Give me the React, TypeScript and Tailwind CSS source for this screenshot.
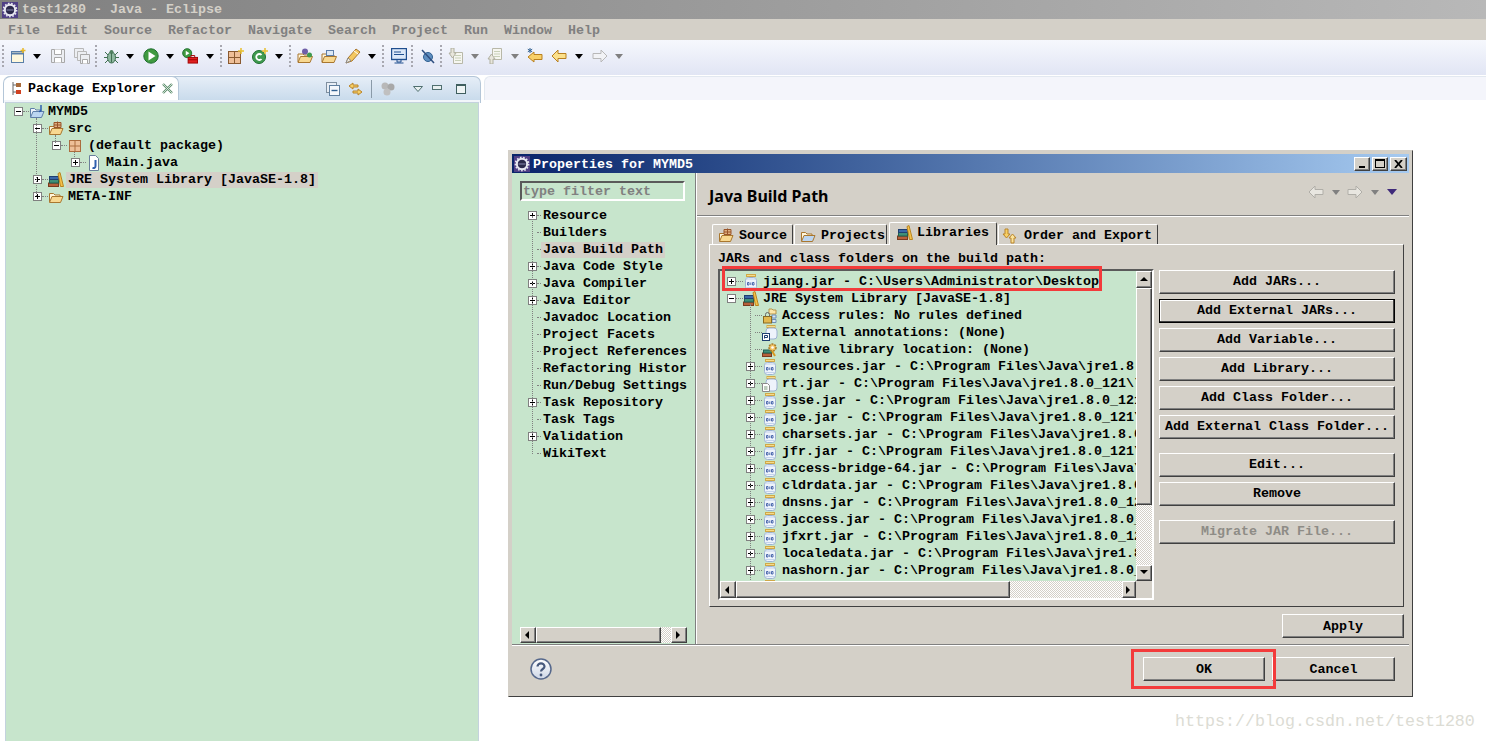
import type { ReactNode } from 'react'

const FACE = 'bg-[#d4d0c8]'
const RAISED =
  'border border-t-white border-l-white border-r-[#404040] border-b-[#404040] shadow-[inset_-1px_-1px_0_#808080]'
const HATCH = 'bg-[repeating-conic-gradient(#d4d0c8_0%_25%,#ffffff_0%_50%)] bg-[length:2px_2px]'

/* ---------- small drawings ---------- */

function Gear({ className }: { className: string }) {
  return (
    <svg viewBox="0 0 16 16" className={className}>
      <rect width="16" height="16" fill="#4f3f86" />
      <circle cx="8" cy="8" r="5.2" fill="none" stroke="#e8e8f0" strokeWidth="2" />
      <circle cx="8" cy="8" r="6.6" fill="none" stroke="#e8e8f0" strokeWidth="1.6" strokeDasharray="1.6 1.6" />
      <circle cx="8" cy="8" r="4" fill="#2b2a4a" />
      <path d="M4.5 8h7" stroke="#8a88b0" />
    </svg>
  )
}

function Jar() {
  return (
    <svg viewBox="0 0 16 16" className="w-4 h-4 shrink-0">
      <rect x="3.500" y="0.500" width="9" height="2" fill="#f6dc8a" stroke="#d0a848" />
      <rect x="2.500" y="3.500" width="11" height="12" rx="3" fill="#eef3fb" stroke="#9db2d2" />
      <path d="M3 5h10" stroke="#c4d4ec" />
      <path d="M4.500 8.500v2.500h1.500V8.500zM7.800 8.500v2.500M9.500 8.500v2.500h1.500V8.500z" fill="none" stroke="#3d5ea6" strokeWidth="0.900" />
      <path d="M3.500 13.500h9" stroke="#c4d4ec" />
    </svg>
  )
}

function OpenFolder({ tint = '#f8d890' }: { tint?: string }) {
  return (
    <svg viewBox="0 0 16 16" className="w-4 h-4 shrink-0">
      <path d="M1.500 13V4.500h4l1.500 1.500h5v2" fill="#fff6dc" stroke="#a9772f" />
      <path d="M1.500 13.500l2.500-6h11l-2.500 6z" fill={tint} stroke="#a9772f" />
    </svg>
  )
}

function ProjectFolder() {
  return (
    <svg viewBox="0 0 16 16" className="w-4 h-4 shrink-0">
      <path d="M1.500 13V4.500h4l1.500 1.500h5v2" fill="#eef4fc" stroke="#5f7fa8" />
      <path d="M1.500 13.500l2.500-6h11l-2.500 6z" fill="#bcd6f2" stroke="#5f7fa8" />
      <path d="M12 1v5q0 1.500-2 1.500" fill="none" stroke="#2f5fae" strokeWidth="1.500" />
    </svg>
  )
}

function SrcFolder() {
  return (
    <svg viewBox="0 0 16 16" className="w-4 h-4 shrink-0">
      <path d="M1.500 13V5.500h10v2" fill="#fff6dc" stroke="#a9772f" />
      <path d="M1.500 13.500l2.500-6h11l-2.500 6z" fill="#f8d890" stroke="#a9772f" />
      <path d="M6 4h7M6 1.500h7v5H6zM9.500 0.500v6" fill="#e0b080" stroke="#99552a" />
    </svg>
  )
}

function Pkg() {
  return (
    <svg viewBox="0 0 16 16" className="w-4 h-4 shrink-0">
      <rect x="2.500" y="2.500" width="11" height="11" fill="#eebf98" stroke="#ab6c3e" />
      <path d="M8 2.500v11M2.500 8h11" stroke="#ab6c3e" />
    </svg>
  )
}

function JavaFile() {
  return (
    <svg viewBox="0 0 16 16" className="w-4 h-4 shrink-0">
      <path d="M3.500 0.500h6l3 3v12h-9z" fill="#fff" stroke="#6a7f9c" />
      <path d="M9.500 5v6q0 2.500-3 2" fill="none" stroke="#2f5fae" strokeWidth="2" />
    </svg>
  )
}

function Library() {
  return (
    <svg viewBox="0 0 16 16" className="w-4 h-4 shrink-0">
      <rect x="0.500" y="11" width="10" height="3.500" fill="#b8603a" stroke="#7a3a1e" />
      <rect x="1.500" y="7.500" width="9" height="3.500" fill="#3f8f78" stroke="#1f5f50" />
      <rect x="1.500" y="4.500" width="9" height="3" fill="#3a68a8" stroke="#1f3f70" />
      <path d="M10 1.500l2-1 3.500 14h-3z" fill="#f4c14a" stroke="#b98420" />
    </svg>
  )
}

function AccessIcon() {
  return (
    <svg viewBox="0 0 16 16" className="w-4 h-4 shrink-0">
      <path d="M7 1h3l1 1h3v4H7z" fill="#fbe6a8" stroke="#b9954a" />
      <path d="M10 7h4v3h-4zM10 11.500h4v3h-4z" fill="#d9e6f5" stroke="#6f8fb5" />
      <rect x="1.500" y="8.500" width="8" height="6.500" fill="#e2b850" stroke="#8a6a20" />
      <path d="M3.500 8.500v-2a2 2 0 014 0v2" fill="none" stroke="#6a6a6a" />
    </svg>
  )
}

function AnnotIcon() {
  return (
    <svg viewBox="0 0 16 16" className="w-4 h-4 shrink-0">
      <rect x="5" y="0.500" width="8" height="2" fill="#f6dc8a" stroke="#d0a848" />
      <rect x="4" y="3" width="11" height="11" rx="3" fill="#eef3fb" stroke="#9db2d2" />
      <rect x="0.500" y="8.500" width="7" height="7" fill="#fff" stroke="#1f3f70" />
      <path d="M2.500 13.500v-3h3v2h-3" fill="none" stroke="#1f3f70" />
    </svg>
  )
}

function NativeIcon() {
  return (
    <svg viewBox="0 0 16 16" className="w-4 h-4 shrink-0">
      <rect x="0.500" y="11" width="9" height="3.500" fill="#b8603a" stroke="#7a3a1e" />
      <rect x="1.500" y="8" width="8" height="3" fill="#3f8f78" stroke="#1f5f50" />
      <circle cx="10.500" cy="5.500" r="3.500" fill="#f0c060" stroke="#a57a2a" strokeWidth="1.500" strokeDasharray="2 1" />
      <circle cx="10.500" cy="5.500" r="1.300" fill="#fff" />
      <path d="M10 9l3 5" stroke="#d89a20" strokeWidth="2" />
    </svg>
  )
}

function RtJar() {
  return (
    <svg viewBox="0 0 16 16" className="w-4 h-4 shrink-0">
      <rect x="5" y="0.500" width="8" height="2" fill="#f6dc8a" stroke="#d0a848" />
      <rect x="4" y="3" width="11" height="12" rx="3" fill="#eef3fb" stroke="#9db2d2" />
      <path d="M0.500 7.500h5l2 2v6h-7z" fill="#fff" stroke="#8a8a8a" />
      <path d="M2 11h3.500M2 13h3.500" stroke="#7a9a7a" />
    </svg>
  )
}

function OrderIcon() {
  return (
    <svg viewBox="0 0 16 16" className="w-4 h-4 shrink-0">
      <path d="M3 1h3v5h2L4.500 10 1 6h2z" fill="#f7d066" stroke="#b9842a" />
      <path d="M9 15h3v-5h2l-3.500-4L7 10h2z" fill="#fbe39a" stroke="#b9842a" />
    </svg>
  )
}

function DropArrow({ className = 'fill-black' }: { className?: string }) {
  return (
    <svg viewBox="0 0 8 5" className={`w-[8px] h-[5px] shrink-0 ${className}`}>
      <path d="M0 0h8L4 5z" />
    </svg>
  )
}

function Arrow({ dir, className, stroke, fill }: { dir: 'left' | 'right'; className?: string; stroke: string; fill: string }) {
  return (
    <svg viewBox="0 0 16 14" className={`w-4 h-[14px] shrink-0 ${className ?? ''}`}>
      <path
        d={dir === 'left' ? 'M1 7l6-6v3.500h8v5H7V13z' : 'M15 7L9 1v3.500H1v5h8V13z'}
        fill={fill}
        stroke={stroke}
      />
    </svg>
  )
}

function Expander({ open }: { open?: boolean }) {
  return (
    <svg viewBox="0 0 9 9" className="w-[9px] h-[9px] shrink-0">
      <rect x="0.500" y="0.500" width="8" height="8" fill="#fff" stroke="#808080" />
      <path d={open ? 'M2 4.500h5' : 'M2 4.500h5M4.500 2v5'} stroke="#000" />
    </svg>
  )
}

function Grip({ className }: { className: string }) {
  return <span className={`w-[2px] h-[22px] shrink-0 border-l-2 border-dotted border-[#a8a8b0] ${className}`} />
}

function ScrollBtn({ dir, className = '' }: { dir: 'up' | 'down' | 'left' | 'right'; className?: string }) {
  const d = { up: 'M4 1l4 4H0z', down: 'M4 5L0 1h8z', left: 'M1 4l4-4v8z', right: 'M5 4L1 0v8z' }[dir]
  return (
    <div className={`${FACE} ${RAISED} shrink-0 flex items-center justify-center ${className}`}>
      <svg viewBox="0 0 8 8" className="w-2 h-2 fill-black">
        <path d={d} />
      </svg>
    </div>
  )
}

/* ---------- tree ---------- */

function TreeRow({
  indent,
  open,
  leaf,
  icon,
  textClass = '',
  dots = 'w-[6px]',
  children,
}: {
  indent: string
  open?: boolean
  leaf?: boolean
  icon?: ReactNode
  textClass?: string
  dots?: string
  children: ReactNode
}) {
  return (
    <div className={`flex h-[17px] items-center whitespace-nowrap ${indent}`}>
      {leaf ? <span className="w-[9px] h-px shrink-0" /> : <Expander open={open} />}
      <span className={`border-t border-dotted border-[#808080] shrink-0 ${dots}`} />
      {icon}
      <span className={`h-[16px] leading-[16px] px-[2px] shrink-0 ${textClass}`}>{children}</span>
    </div>
  )
}

const JRE_JARS = [
  ['resources.jar - C:\\Program Files\\Java\\jre1.8.0_121\\lib', 'jar'],
  ['rt.jar - C:\\Program Files\\Java\\jre1.8.0_121\\lib\\rt', 'rt'],
  ['jsse.jar - C:\\Program Files\\Java\\jre1.8.0_121\\lib', 'jar'],
  ['jce.jar - C:\\Program Files\\Java\\jre1.8.0_121\\lib', 'jar'],
  ['charsets.jar - C:\\Program Files\\Java\\jre1.8.0_121\\lib', 'jar'],
  ['jfr.jar - C:\\Program Files\\Java\\jre1.8.0_121\\lib', 'jar'],
  ['access-bridge-64.jar - C:\\Program Files\\Java\\jre1.8.0', 'jar'],
  ['cldrdata.jar - C:\\Program Files\\Java\\jre1.8.0_121\\lib', 'jar'],
  ['dnsns.jar - C:\\Program Files\\Java\\jre1.8.0_121\\lib', 'jar'],
  ['jaccess.jar - C:\\Program Files\\Java\\jre1.8.0_121\\lib', 'jar'],
  ['jfxrt.jar - C:\\Program Files\\Java\\jre1.8.0_121\\lib', 'jar'],
  ['localedata.jar - C:\\Program Files\\Java\\jre1.8.0_121', 'jar'],
  ['nashorn.jar - C:\\Program Files\\Java\\jre1.8.0_121\\lib', 'jar'],
  ['sunec.jar - C:\\Program Files\\Java\\jre1.8.0_121\\lib', 'jar'],
]

const PREF_PAGES: [string, boolean, boolean?][] = [
  ['Resource', true],
  ['Builders', false],
  ['Java Build Path', false, true],
  ['Java Code Style', true],
  ['Java Compiler', true],
  ['Java Editor', true],
  ['Javadoc Location', false],
  ['Project Facets', false],
  ['Project References', false],
  ['Refactoring History', false],
  ['Run/Debug Settings', false],
  ['Task Repository', true],
  ['Task Tags', false],
  ['Validation', true],
  ['WikiText', false],
]

function SideButton({ label, className = '', disabled, main }: { label: string; className?: string; disabled?: boolean; main?: boolean }) {
  return (
    <button
      className={`w-full h-[24px] shrink-0 ${FACE} text-center ${main ? 'border border-black shadow-[inset_-1px_-1px_0_#404040,inset_1px_1px_0_#fff]' : RAISED} ${disabled ? 'text-[#8e8c86]' : ''} ${className}`}
    >
      {label}
    </button>
  )
}

function Toolbar() {
  const drop = 'fill-black'
  const dim = 'fill-[#808080]'
  return (
    <div className="h-[35px] flex items-center pl-[2px] pb-[3px] bg-gradient-to-b from-[#f6f8fd] to-[#e1e5f4]">
      <Grip className="" />
      {/* new */}
      <svg viewBox="0 0 16 16" className="w-4 h-4 ml-[6px]">
        <rect x="1.500" y="3.500" width="12" height="11" fill="#fff8dc" stroke="#5a7fa8" />
        <path d="M1.500 5.500h12" stroke="#5a7fa8" strokeWidth="2" />
        <path d="M13 0v5M10.500 2.500h5" stroke="#e8b828" strokeWidth="1.500" />
      </svg>
      <span className="ml-[7px]"><DropArrow className={drop} /></span>
      {/* save */}
      <svg viewBox="0 0 16 16" className="w-4 h-4 ml-[9px]">
        <path d="M1.500 1.500h13v13h-13z" fill="#eceef2" stroke="#a8a8a8" />
        <path d="M4.500 1.500v5h7v-5M4.500 14.500v-5h7v5" fill="#fff" stroke="#a8a8a8" />
      </svg>
      <svg viewBox="0 0 16 16" className="w-4 h-4 ml-[8px]">
        <path d="M0.500 0.500h9v9h-9z" fill="#eceef2" stroke="#b8b8b8" />
        <path d="M3.500 3.500h9v9h-9z" fill="#eceef2" stroke="#b8b8b8" />
        <path d="M6.500 6.500h9v9h-9z" fill="#eceef2" stroke="#a8a8a8" />
        <path d="M8.500 15.500v-4h5v4" fill="#fff" stroke="#a8a8a8" />
      </svg>
      <Grip className="ml-[5px]" />
      {/* debug */}
      <svg viewBox="0 0 16 16" className="w-4 h-4 ml-[6px]">
        <ellipse cx="8.500" cy="9.500" rx="4" ry="5.500" fill="#8fb8a0" stroke="#3f6f50" />
        <circle cx="8.500" cy="4" r="2" fill="#4f7f5f" />
        <path d="M2 4l3 3M15 4l-3 3M1 9.500h3.500M16 9.500h-3.500M2 15l3-3M15 15l-3-3M8.500 5v9.500" stroke="#3f6f50" fill="none" />
      </svg>
      <span className="ml-[7px]"><DropArrow className={drop} /></span>
      {/* run */}
      <svg viewBox="0 0 16 16" className="w-4 h-4 ml-[9px]">
        <circle cx="8" cy="8" r="7.200" fill="#3f9a3f" stroke="#1f6f2f" />
        <path d="M5.500 3.500l7 4.500-7 4.500z" fill="#fff" />
      </svg>
      <span className="ml-[7px]"><DropArrow className={drop} /></span>
      {/* external tools */}
      <svg viewBox="0 0 17 16" className="w-4 h-4 ml-[8px]">
        <circle cx="5.500" cy="5" r="4.800" fill="#3f9a3f" stroke="#1f6f2f" />
        <path d="M4 2.500l4 2.500-4 2.500z" fill="#fff" />
        <rect x="6.500" y="9.500" width="10" height="6" fill="#e02020" stroke="#a00000" />
        <path d="M9.500 9.500v-2h4v2M6.500 12h10" fill="none" stroke="#a00000" />
      </svg>
      <span className="ml-[8px]"><DropArrow className={drop} /></span>
      <Grip className="ml-[6px]" />
      {/* new package */}
      <svg viewBox="0 0 16 16" className="w-4 h-4 ml-[6px]">
        <rect x="0.500" y="3.500" width="12" height="12" fill="#eebf98" stroke="#8a5a30" />
        <path d="M6.500 3.500v12M0.500 9.500h12" stroke="#8a5a30" />
        <path d="M13 0v6M10 3h6" stroke="#e8c030" strokeWidth="1.500" />
      </svg>
      {/* new class */}
      <svg viewBox="0 0 16 16" className="w-4 h-4 ml-[8px]">
        <circle cx="7" cy="9" r="6.500" fill="#3f9a4f" stroke="#1f6f2f" />
        <path d="M9.500 7a3 3 0 100 4" fill="none" stroke="#fff" strokeWidth="1.800" />
        <path d="M13 0v6M10 3h6" stroke="#e8c030" strokeWidth="1.500" />
      </svg>
      <span className="ml-[7px]"><DropArrow className={drop} /></span>
      <Grip className="ml-[6px]" />
      {/* open type */}
      <svg viewBox="0 0 16 16" className="w-4 h-4 ml-[6px]">
        <path d="M1 14V6h5l1 1h6v2" fill="#fff6dc" stroke="#a9772f" />
        <path d="M1 14.500l2.500-6h12l-2.500 6z" fill="#f8d890" stroke="#a9772f" />
        <circle cx="8" cy="3.500" r="3" fill="#6f5fa8" />
        <circle cx="12.500" cy="7" r="2.500" fill="#3f9a4f" />
      </svg>
      <svg viewBox="0 0 16 16" className="w-4 h-4 ml-[8px]">
        <path d="M1 14V6h4l1 1h7v2" fill="#fff6dc" stroke="#a9772f" />
        <path d="M1 14.500l2.500-6h12l-2.500 6z" fill="#f8d890" stroke="#a9772f" />
        <rect x="5.500" y="2.500" width="7" height="5" fill="#dce8f5" stroke="#5f7fa8" />
      </svg>
      {/* search pencil */}
      <svg viewBox="0 0 16 16" className="w-4 h-4 ml-[8px]">
        <path d="M1 15l2-5 8-9 4 3-8 9z" fill="#f4c860" stroke="#a9772f" />
        <path d="M1 15l2-5 3 2.500z" fill="#f8f0e0" stroke="#8a8a8a" />
        <path d="M9 3l4 3" stroke="#fff" />
      </svg>
      <span className="ml-[7px]"><DropArrow className={drop} /></span>
      <Grip className="ml-[6px]" />
      {/* monitor */}
      <svg viewBox="0 0 16 16" className="w-4 h-4 ml-[7px]">
        <rect x="0.500" y="0.500" width="15" height="11" fill="#dbe8f8" stroke="#1f4f8f" strokeWidth="1.400" />
        <path d="M3 4h7M3 6.500h10" stroke="#1f4f8f" />
        <path d="M6 12v2h4v-2M3.500 15h9" stroke="#1f4f8f" fill="none" />
      </svg>
      <Grip className="ml-[4px]" />
      {/* skip breakpoints */}
      <svg viewBox="0 0 16 16" className="w-4 h-4 ml-[7px]">
        <circle cx="8" cy="9" r="4.500" fill="#5f8fc0" stroke="#2f5f90" />
        <path d="M2 2l12 13" stroke="#2f4f80" strokeWidth="1.500" />
      </svg>
      <Grip className="ml-[4px]" />
      {/* next annotation */}
      <svg viewBox="0 0 16 16" className="w-4 h-4 ml-[6px]">
        <path d="M5.500 4.500h9v11h-9z" fill="#f6f6f0" stroke="#b8b8a8" />
        <path d="M7 7.500h6M7 10h6M7 12.500h6" stroke="#c8d0b8" />
        <path d="M3 0h3v5h2L4.500 10 1 5h2z" fill="#e8e6dc" stroke="#b0b0a0" />
      </svg>
      <span className="ml-[7px]"><DropArrow className={dim} /></span>
      <svg viewBox="0 0 16 16" className="w-4 h-4 ml-[8px]">
        <path d="M5.500 0.500h9v11h-9z" fill="#f6f6f0" stroke="#b8b8a8" />
        <path d="M7 3.500h6M7 6h6M7 8.500h6" stroke="#c8d0b8" />
        <path d="M3 16h3v-5h2L4.500 6 1 11h2z" fill="#e8e6dc" stroke="#b0b0a0" />
      </svg>
      <span className="ml-[8px]"><DropArrow className={dim} /></span>
      {/* last edit */}
      <svg viewBox="0 0 16 16" className="w-4 h-4 ml-[8px]">
        <path d="M1 9l6-5v2.500h8v5H7V14z" fill="#f8d068" stroke="#b9801f" />
        <path d="M3 0v5M0.800 1.200l4.400 2.600M5.200 1.200L0.800 3.800" stroke="#2f5f90" />
      </svg>
      <Arrow dir="left" stroke="#b9801f" fill="#fbe08a" className="ml-[8px]" />
      <span className="ml-[8px]"><DropArrow className={drop} /></span>
      <Arrow dir="right" stroke="#b8b8b8" fill="#f2f3f6" className="ml-[9px]" />
      <span className="ml-[7px]"><DropArrow className={dim} /></span>
    </div>
  )
}

function PackageExplorer() {
  return (
    <div className="ml-[3px] w-[478px] flex flex-col shrink-0">
      <div className="h-[24px] flex rounded-t-[7px] border border-b-0 border-[#b4c6d8] bg-gradient-to-b from-[#e6eef7] to-[#c9dbec]">
        <div className="w-[175px] -mt-px h-[24px] flex items-center pl-[8px] bg-white rounded-t-[7px] border-t border-r border-[#b4c6d8] font-bold">
          <svg viewBox="0 0 10 14" className="w-[10px] h-[14px] shrink-0">
            <path d="M1 0v13M1 3h3M1 10h3" stroke="#666" fill="none" />
            <rect x="4" y="1" width="5" height="4" fill="#a86a3a" />
            <rect x="4" y="8" width="5" height="4" fill="#d04020" />
          </svg>
          <span className="ml-[6px]">Package Explorer</span>
          <svg viewBox="0 0 11 11" className="w-[11px] h-[11px] ml-[6px] shrink-0">
            <path d="M1 1l9 9M10 1l-9 9" stroke="#5f8f6f" strokeWidth="2.400" />
            <path d="M1 1l9 9M10 1l-9 9" stroke="#e8f2ea" strokeWidth="0.800" />
          </svg>
        </div>
        <div className="flex-1 flex items-center">
          <svg viewBox="0 0 14 14" className="w-[14px] h-[14px] ml-[147px]">
            <rect x="0.500" y="0.500" width="10" height="10" fill="#e8eef5" stroke="#7f8f9f" />
            <rect x="3.500" y="3.500" width="10" height="10" fill="#f4f7fb" stroke="#5f7f9f" />
            <path d="M5.500 8.500h6" stroke="#2f5f90" strokeWidth="1.400" />
          </svg>
          <svg viewBox="0 0 15 14" className="w-[15px] h-[14px] ml-[8px]">
            <path d="M5 1L1 4l4 3V5h5V3H5z" fill="#f7d066" stroke="#b9842a" />
            <path d="M10 7l4 3-4 3v-2H5V9h5z" fill="#f7d066" stroke="#b9842a" />
          </svg>
          <span className="w-px h-[18px] bg-[#8a9aa8] ml-[8px]" />
          <svg viewBox="0 0 14 14" className="w-[14px] h-[14px] ml-[9px]">
            <circle cx="4" cy="4" r="3.500" fill="#b8b8b8" />
            <circle cx="10" cy="5" r="3.500" fill="#a8a8a8" />
            <circle cx="6" cy="10" r="3.500" fill="#c0c0c0" />
          </svg>
          <svg viewBox="0 0 10 6" className="w-[10px] h-[6px] ml-[18px]">
            <path d="M0.500 0.500h9L5 5.500z" fill="#e8f0f0" stroke="#4f6f6f" />
          </svg>
          <span className="w-[10px] h-[5px] ml-[9px] mb-[2px] border border-[#4f6f6f] bg-[#e8f0f0]" />
          <span className="w-[10px] h-[10px] ml-[14px] border border-[#3f5f5f] border-t-2 bg-[#eef4f4]" />
        </div>
      </div>
      <div className="h-[3px] border-x border-[#b4c6d8] bg-[#f2f6fa]" />
      <div className="relative flex-1 bg-[#c7e5cc] mx-[3px] outline outline-1 outline-[#c4d2de] overflow-hidden font-bold">
        <span className="absolute left-[30px] top-[15px] h-[78px] border-l border-dotted border-[#808080]" />
        <span className="absolute left-[49px] top-[32px] h-[8px] border-l border-dotted border-[#808080]" />
        <span className="absolute left-[68px] top-[49px] h-[7px] border-l border-dotted border-[#808080]" />
        <TreeRow indent="pl-[8px]" open icon={<ProjectFolder />} textClass="ml-px">MYMD5</TreeRow>
        <TreeRow indent="pl-[27px]" open icon={<SrcFolder />} textClass="ml-[2px]">src</TreeRow>
        <TreeRow indent="pl-[46px]" open icon={<Pkg />} textClass="ml-[3px]">(default package)</TreeRow>
        <TreeRow indent="pl-[65px]" icon={<JavaFile />} textClass="ml-[2px]">Main.java</TreeRow>
        <TreeRow indent="pl-[27px]" icon={<Library />} textClass="ml-[2px] bg-[#d4d0c8]">JRE System Library [JavaSE-1.8]</TreeRow>
        <TreeRow indent="pl-[27px]" icon={<OpenFolder />} textClass="ml-[2px]">META-INF</TreeRow>
      </div>
    </div>
  )
}

function PropertiesDialog() {
  return (
    <div className={`${FACE} w-[905px] h-[547px] p-[3px] border border-t-[#d4d0c8] border-l-[#d4d0c8] border-r-[#404040] border-b-[#404040] font-bold flex flex-col`}>
      {/* title bar */}
      <div className="h-[19px] shrink-0 flex items-center pl-[2px] pr-[2px] bg-gradient-to-r from-[#0a246a] to-[#a6caf0] text-white">
        <Gear className="w-4 h-4" />
        <span className="ml-[3px] mt-[2px]">Properties for MYMD5</span>
        <div className="ml-auto flex">
          <div className={`${FACE} ${RAISED} w-4 h-[14px] flex items-end justify-center pb-[2px]`}>
            <span className="w-[6px] h-[2px] bg-black" />
          </div>
          <div className={`${FACE} ${RAISED} w-4 h-[14px] ml-[2px] flex items-center justify-center`}>
            <span className="w-[10px] h-[9px] border border-black border-t-2" />
          </div>
          <div className={`${FACE} ${RAISED} w-[17px] h-[14px] ml-[2px] flex items-center justify-center`}>
            <svg viewBox="0 0 9 8" className="w-[9px] h-2">
              <path d="M1 0l7 8M8 0L1 8" stroke="#000" strokeWidth="1.800" />
            </svg>
          </div>
        </div>
      </div>

      <div className="h-[471px] shrink-0 flex">
        {/* preference tree */}
        <div className="w-[183px] shrink-0 bg-[#c7e5cc] flex flex-col px-[8px] pt-[8px]">
          <div className="h-[20px] w-[165px] shrink-0 border-2 border-t-[#5a5a5a] border-l-[#5a5a5a] border-r-white border-b-white text-[#808080] pl-px leading-[18px]">
            type filter text
          </div>
          <div className="relative mt-[6px] overflow-hidden w-[167px]">
            <span className="absolute left-[12px] top-[9px] h-[238px] border-l border-dotted border-[#808080]" />
            {PREF_PAGES.map(([name, hasKids, selected]) => (
              <TreeRow
                key={name}
                indent="pl-[8px]"
                leaf={!hasKids}
                dots="w-[4px]"
                textClass={selected ? 'bg-[#d4d0c8]' : ''}
              >
                {name}
              </TreeRow>
            ))}
          </div>
          <div className="mt-auto mb-px h-[16px] flex shrink-0">
            <ScrollBtn dir="left" className="w-[16px]" />
            <div className={`${FACE} ${RAISED} w-[125px]`} />
            <div className={`flex-1 ${HATCH}`} />
            <ScrollBtn dir="right" className="w-[16px]" />
          </div>
        </div>
        <div className="w-[2px] shrink-0 border-l border-l-[#808080] border-r border-r-white" />

        {/* build path page */}
        <div className="flex-1 flex flex-col min-w-0">
          <div className="h-[42px] shrink-0 flex items-center pl-[12px] pr-[12px]">
            <span className="mt-[4px] font-['Noto_Sans',sans-serif] text-[16px] font-bold">Java Build Path</span>
            <Arrow dir="left" stroke="#b0aea8" fill="#e8e6e0" className="ml-auto mb-[4px]" />
            <span className="ml-[8px] mb-[4px]"><DropArrow className="fill-[#808080]" /></span>
            <Arrow dir="right" stroke="#b0aea8" fill="#e8e6e0" className="ml-[7px] mb-[4px]" />
            <span className="ml-[8px] mb-[4px]"><DropArrow className="fill-[#808080]" /></span>
            <svg viewBox="0 0 10 6" className="w-[10px] h-[6px] ml-[8px] mb-[4px]">
              <path d="M0 0h10L5 6z" fill="#3f2a7a" />
            </svg>
          </div>
          <div className="h-[2px] shrink-0 border-t border-t-[#808080] border-b border-b-white" />
          <div className="h-[27px] shrink-0 flex items-end gap-px pl-[15px]">
            <div className="w-[81px] h-[20px] flex items-center pl-[5px] pt-[2px] border-t border-l border-r border-t-white border-l-white border-r-[#404040] rounded-t-[2px]">
              <SrcFolder /><span className="ml-[5px]">Source</span>
            </div>
            <div className="w-[93px] h-[20px] flex items-center pl-[5px] pt-[2px] border-t border-l border-r border-t-white border-l-white border-r-[#404040] rounded-t-[2px]">
              <OpenFolder tint="#bcd6f2" /><span className="ml-[5px]">Projects</span>
            </div>
            <div className="relative z-10 -mb-px ml-px w-[108px] h-[23px] flex items-center pb-[3px] pl-[7px] bg-[#d4d0c8] border-t border-l border-r border-t-white border-l-white border-r-[#404040] rounded-t-[2px]">
              <Library /><span className="ml-[4px]">Libraries</span>
            </div>
            <div className="w-[160px] h-[20px] flex items-center pl-[3px] pt-[2px] border-t border-l border-r border-t-white border-l-white border-r-[#404040] rounded-t-[2px]">
              <OrderIcon /><span className="ml-[6px]">Order and Export</span>
            </div>
          </div>
          <div className="ml-[12px] w-[695px] h-[363px] shrink-0 border border-t-white border-l-white border-r-[#404040] border-b-[#404040] pl-[8px] pt-[6px]">
            <div className="h-[16px] leading-[16px]">JARs and class folders on the build path:</div>
            <div className="flex mt-[2px]">
              {/* library list */}
              <div className="w-[436px] h-[331px] shrink-0 border-2 border-t-[#5a5a5a] border-l-[#5a5a5a] border-r-white border-b-white flex flex-col">
                <div className="flex h-[310px]">
                  <div className="relative w-[416px] bg-[#c7e5cc] overflow-hidden pt-[2px]">
                    <span className="absolute left-[30px] top-[33px] h-[290px] border-l border-dotted border-[#808080]" />
                    <TreeRow indent="pl-[7px]" dots="w-[7px]" icon={<Jar />} textClass="ml-[2px]">{'jiang.jar - C:\\Users\\Administrator\\Desktop'}</TreeRow>
                    <TreeRow indent="pl-[7px]" dots="w-[7px]" open icon={<Library />} textClass="ml-[2px]">JRE System Library [JavaSE-1.8]</TreeRow>
                    <TreeRow indent="pl-[26px]" dots="w-[7px]" leaf icon={<AccessIcon />} textClass="ml-[2px]">Access rules: No rules defined</TreeRow>
                    <TreeRow indent="pl-[26px]" dots="w-[7px]" leaf icon={<AnnotIcon />} textClass="ml-[2px]">External annotations: (None)</TreeRow>
                    <TreeRow indent="pl-[26px]" dots="w-[7px]" leaf icon={<NativeIcon />} textClass="ml-[2px]">Native library location: (None)</TreeRow>
                    {JRE_JARS.map(([label, kind]) => (
                      <TreeRow
                        key={label}
                        indent="pl-[26px]"
                        dots="w-[7px]"
                        icon={kind === 'rt' ? <RtJar /> : <Jar />}
                        textClass="ml-[2px]"
                      >
                        {label}
                      </TreeRow>
                    ))}
                  </div>
                  <div className="w-[16px] shrink-0 flex flex-col">
                    <ScrollBtn dir="up" className="h-[17px]" />
                    <div className={`${FACE} ${RAISED} h-[217px] shrink-0`} />
                    <div className={`flex-1 ${HATCH}`} />
                    <ScrollBtn dir="down" className="h-[16px]" />
                  </div>
                </div>
                <div className="flex h-[17px]">
                  <ScrollBtn dir="left" className="w-[16px]" />
                  <div className={`${FACE} ${RAISED} w-[274px] shrink-0`} />
                  <div className={`w-[112px] ${HATCH}`} />
                  <ScrollBtn dir="right" className="w-[14px]" />
                </div>
              </div>
              {/* action buttons */}
              <div className="ml-[5px] mt-px w-[236px] flex flex-col">
                <SideButton label="Add JARs..." />
                <SideButton label="Add External JARs..." className="mt-[5px]" main />
                <SideButton label="Add Variable..." className="mt-[5px]" />
                <SideButton label="Add Library..." className="mt-[5px]" />
                <SideButton label="Add Class Folder..." className="mt-[5px]" />
                <SideButton label="Add External Class Folder..." className="mt-[5px]" />
                <SideButton label="Edit..." className="mt-[14px]" />
                <SideButton label="Remove" className="mt-[5px]" />
                <SideButton label="Migrate JAR File..." className="mt-[14px]" disabled />
              </div>
            </div>
          </div>
          <div className="mt-[7px] self-end mr-[5px] w-[122px]">
            <SideButton label="Apply" className="pt-[2px]" />
          </div>
        </div>
      </div>

      <div className="h-[2px] shrink-0 border-t border-t-[#808080] border-b border-b-white" />

      {/* footer */}
      <div className="flex-1 flex items-center pl-[18px] pr-[14px] pb-[1px]">
        <svg viewBox="0 0 22 22" className="w-[22px] h-[22px]">
          <defs>
            <linearGradient id="help-bg" x1="0" y1="0" x2="0" y2="1">
              <stop offset="0" stopColor="#ffffff" />
              <stop offset="1" stopColor="#cdd6e6" />
            </linearGradient>
          </defs>
          <circle cx="11" cy="11" r="10" fill="url(#help-bg)" stroke="#56688c" strokeWidth="1.500" />
          <path d="M7.500 8.500a3.500 3.200 0 117 0c0 2.500-3.500 2.500-3.500 5" fill="none" stroke="#46587c" strokeWidth="2.200" />
          <circle cx="11" cy="17" r="1.400" fill="#46587c" />
        </svg>
        <div className="ml-auto w-[122px]">
          <SideButton label="OK" className="pt-[2px]" />
        </div>
        <div className="ml-[7px] w-[123px]">
          <SideButton label="Cancel" className="pt-[2px]" />
        </div>
      </div>
    </div>
  )
}

export default function App() {
  return (
    <div className="relative w-[1486px] h-[741px] overflow-hidden bg-white flex flex-col font-['Liberation_Mono',monospace] text-[13.33px] text-black">
      {/* window title */}
      <div className="h-[19px] shrink-0 flex items-center pl-[2px] bg-gradient-to-r from-[#808080] to-[#b8b8b8] text-[#d4d0c8] font-bold">
        <Gear className="w-4 h-4" />
        <span className="ml-[4px]">test1280 - Java - Eclipse</span>
      </div>

      {/* menu */}
      <div className={`h-[21px] shrink-0 flex items-center gap-4 pl-[8px] pt-[3px] ${FACE} text-[#808080] font-bold`}>
        {['File', 'Edit', 'Source', 'Refactor', 'Navigate', 'Search', 'Project', 'Run', 'Window', 'Help'].map((m) => (
          <span key={m}>{m}</span>
        ))}
      </div>

      <Toolbar />
      <div className="h-px shrink-0 bg-white" />

      <div className="flex-1 flex min-h-0">
        <PackageExplorer />
        <div className="ml-[3px] flex-1">
          <div className="h-[24px] bg-[#f4f5fb] border-l border-t border-[#e2e8f0] rounded-tl-[6px]" />
          <div className="mt-[50px] ml-[24px]">
            <PropertiesDialog />
          </div>
        </div>
      </div>

      {/* callouts drawn over the screenshot */}
      <div className="absolute left-[722px] top-[266px] w-[380px] h-[25px] border-[3px] border-[#f33b3b]" />
      <div className="absolute left-[1131px] top-[649px] w-[145px] h-[40px] border-[3px] border-[#f33b3b]" />
      <div className="absolute left-[1175px] top-[711px] text-[16.67px] leading-[22px] text-[#dcdcd4]">https://blog.csdn.net/test1280</div>
    </div>
  )
}
